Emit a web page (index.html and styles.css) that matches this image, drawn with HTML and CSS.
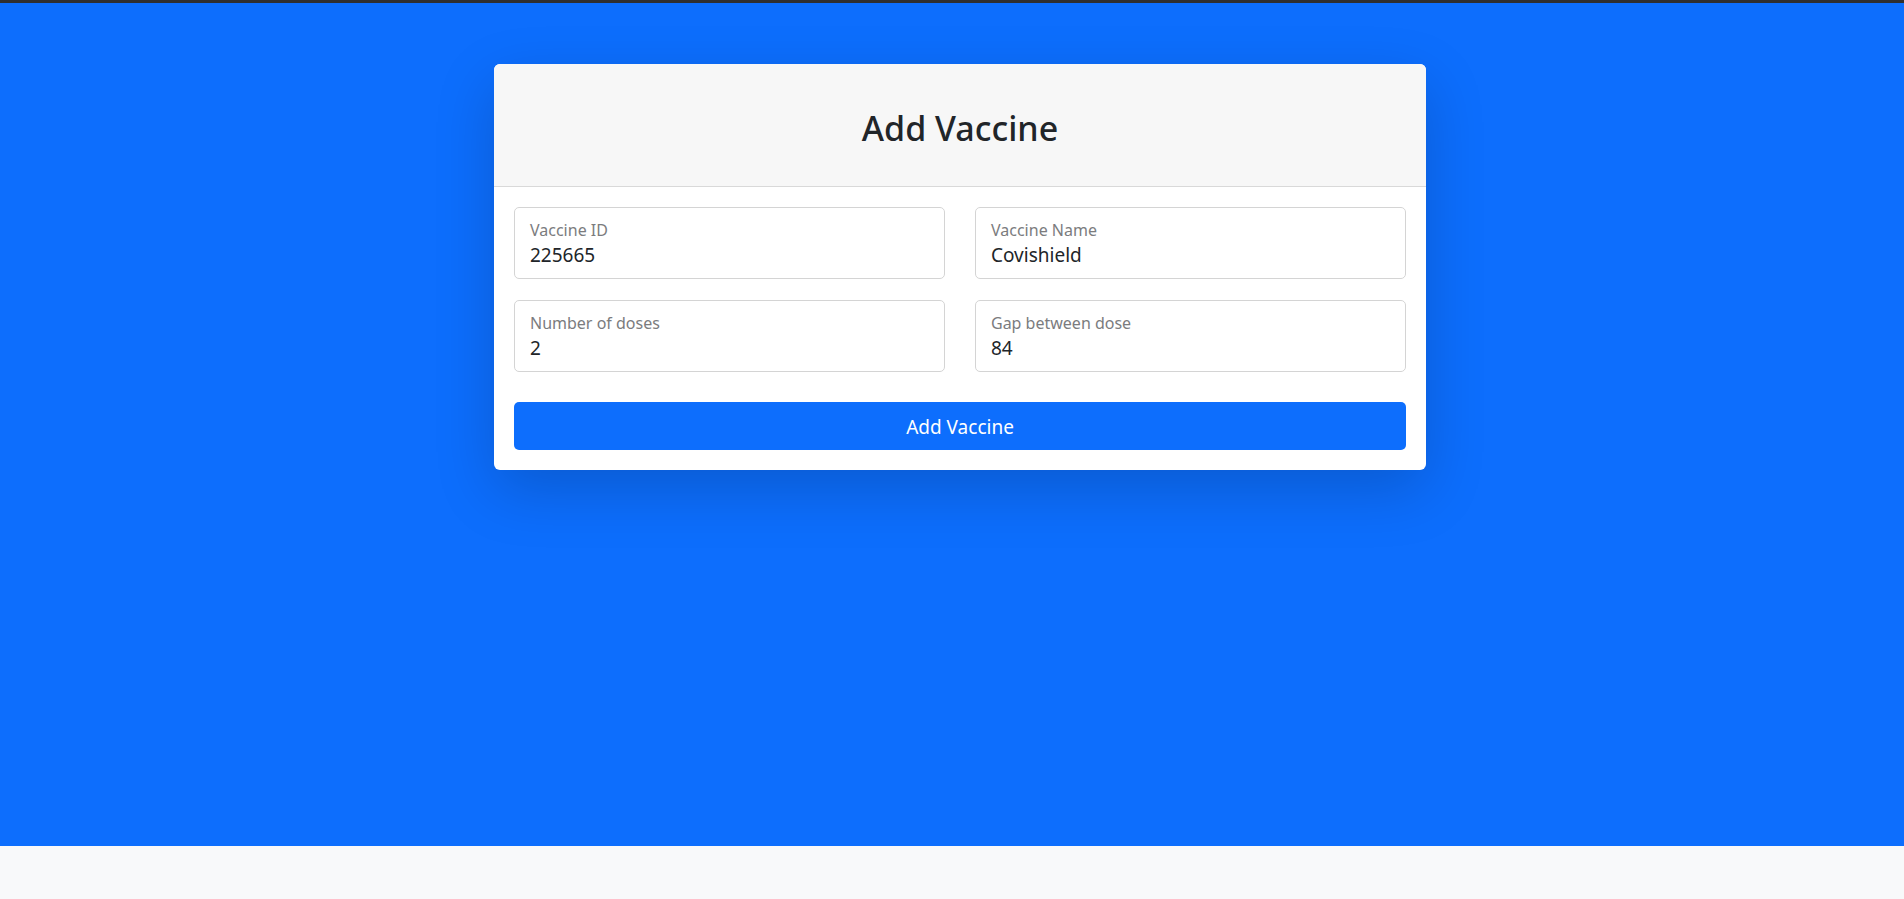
FILE: index.html
```html
<!DOCTYPE html>
<html lang="en">
<head>
<meta charset="utf-8">
<title>Add Vaccine</title>
<link rel="stylesheet" href="styles.css">
</head>
<body>
<div class="topbar"></div>
<main class="hero">
  <div class="card">
    <div class="card-header">
      <h3 class="title">Add Vaccine</h3>
    </div>
    <form class="card-body">
      <div class="grid">
        <label class="field">
          <span class="field-label">Vaccine ID</span>
          <input class="field-input" type="text" value="225665">
        </label>
        <label class="field">
          <span class="field-label">Vaccine Name</span>
          <input class="field-input" type="text" value="Covishield">
        </label>
        <label class="field">
          <span class="field-label">Number of doses</span>
          <input class="field-input" type="text" value="2">
        </label>
        <label class="field">
          <span class="field-label">Gap between dose</span>
          <input class="field-input" type="text" value="84">
        </label>
      </div>
      <button class="btn" type="button">Add Vaccine</button>
    </form>
  </div>
</main>
<footer class="footer"></footer>
</body>
</html>
```
FILE: styles.css
```css
* { box-sizing: border-box; }
html, body { margin: 0; padding: 0; }
body {
  font-family: "Noto Sans", "Open Sans", sans-serif;
  color: #212529;
  background: #f8f9fa;
  height: 899px;
  display: flex;
  flex-direction: column;
  overflow: hidden;
}
.topbar {
  height: 3px;
  background: #2f2f2f;
  flex: none;
}
.hero {
  background: #0d6efd;
  height: 843px;
  flex: none;
  display: flex;
  justify-content: center;
  align-items: flex-start;
  padding: 61px 0 0 16px;
}
.card {
  width: 932px;
  background: #fff;
  border-radius: 6px;
  box-shadow: 0 20px 60px rgba(0, 0, 0, 0.175);
  overflow: hidden;
}
.card-header {
  height: 123px;
  background: #f7f7f7;
  border-bottom: 1px solid #d9d9d9;
  display: flex;
  align-items: center;
  justify-content: center;
  padding-top: 6px;
}
.title {
  margin: 0;
  font-size: 34px;
  font-weight: 500;
  line-height: 1.2;
  color: #212529;
}
.card-body {
  padding: 20px;
  margin: 0;
}
.grid {
  display: grid;
  grid-template-columns: 1fr 1fr;
  column-gap: 30px;
  row-gap: 21px;
}
.field {
  display: flex;
  flex-direction: column;
  height: 72px;
  border: 1px solid #d4d4d4;
  border-radius: 5px;
  padding: 12px 15px 0 15px;
  background: #fff;
}
.field-label {
  font-size: 16px;
  line-height: 20px;
  color: #7b7c7e;
}
.field-input {
  border: 0;
  outline: 0;
  padding: 0;
  margin: 2px 0 0 0;
  font-family: inherit;
  font-size: 19px;
  line-height: 26px;
  height: 26px;
  color: #212529;
  background: transparent;
}
.btn {
  display: block;
  width: 100%;
  height: 48px;
  margin-top: 30px;
  border: 0;
  border-radius: 5px;
  background: #0d6efd;
  color: #fff;
  font-family: inherit;
  font-size: 19px;
  line-height: 28px;
  padding: 2px 0 0 0;
}
.footer {
  flex: 1;
  background: #f8f9fa;
}
```
